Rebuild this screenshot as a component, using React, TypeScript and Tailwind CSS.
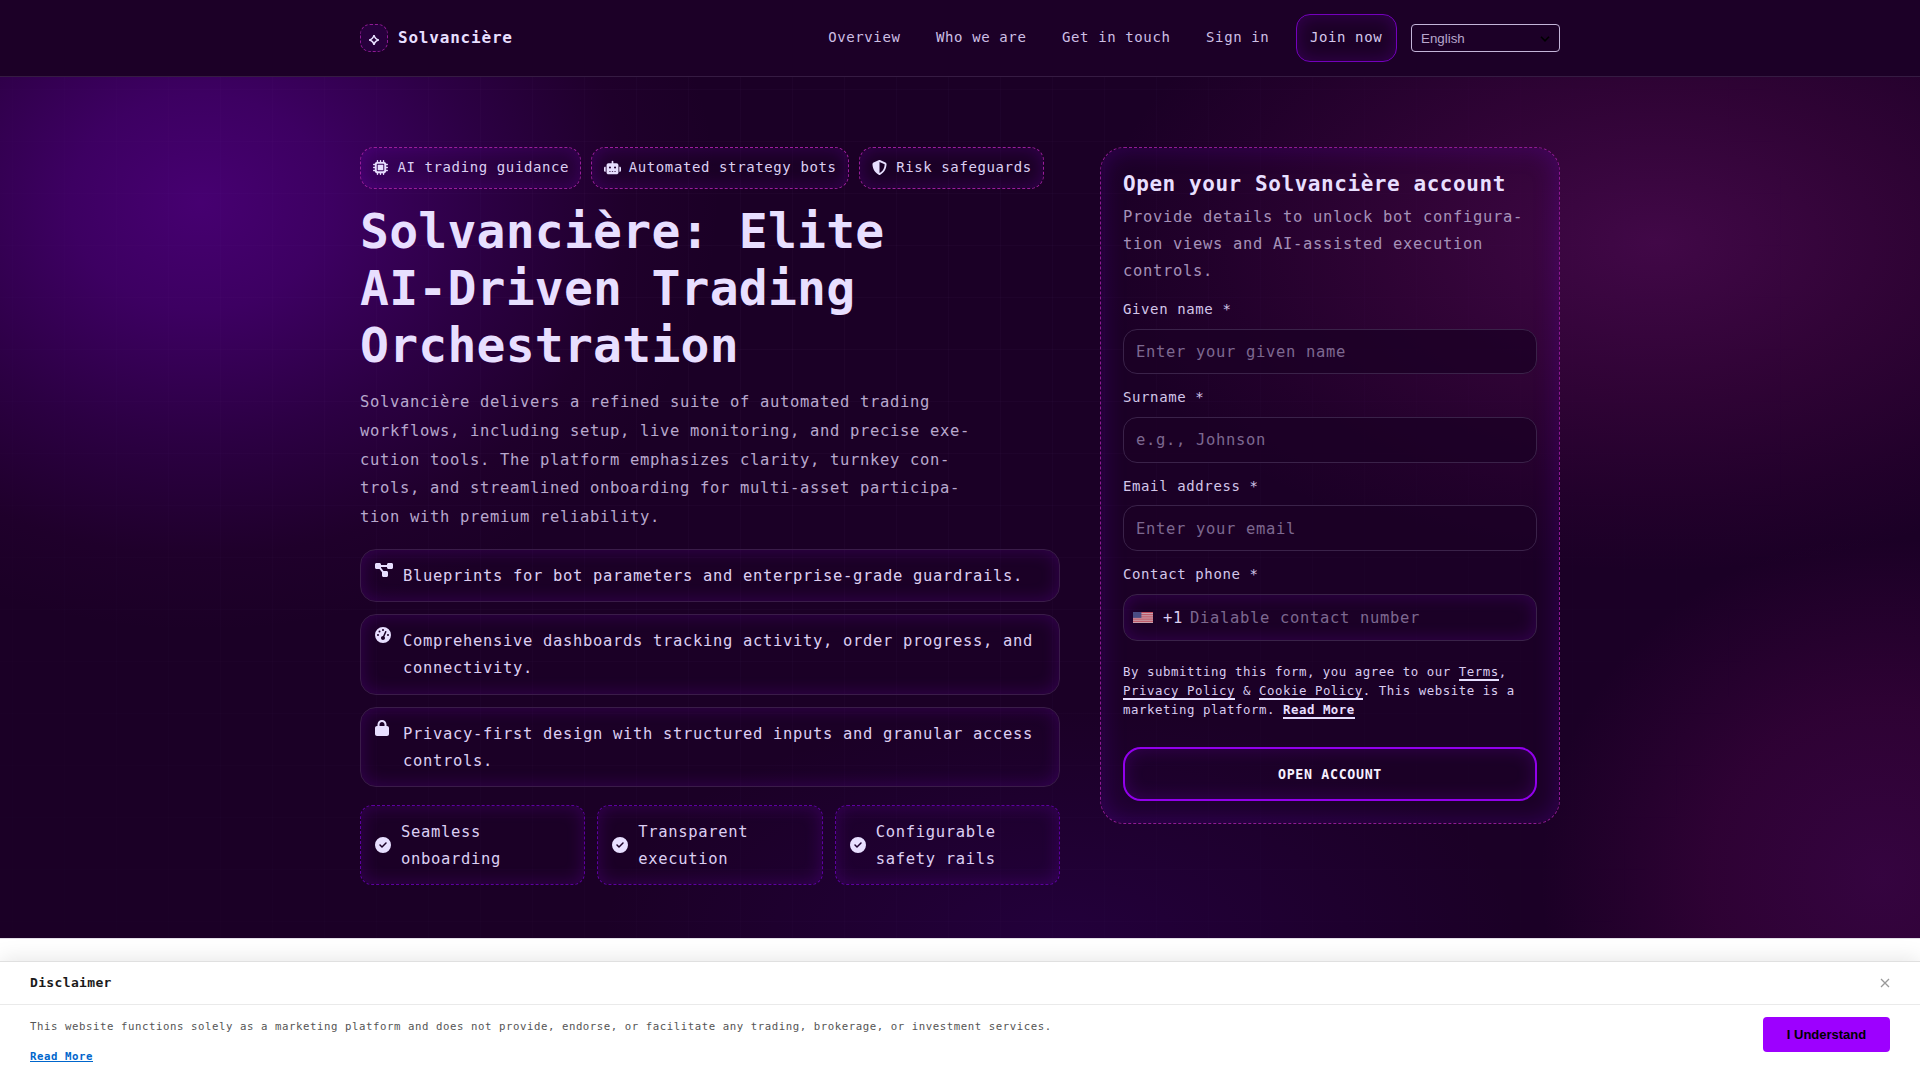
import type { ReactNode } from 'react';
import {
  FaMicrochip,
  FaRobot,
  FaShieldHalved,
  FaDiagramProject,
  FaGaugeHigh,
  FaLock,
  FaCircleCheck
} from 'react-icons/fa6';

const NAV_LINKS = ['Overview', 'Who we are', 'Get in touch', 'Sign in'];

const CHIPS = [
  { icon: <FaMicrochip className="size-[15px]" />, label: 'AI trading guidance' },
  { icon: <FaRobot className="h-[15px] w-[18px]" />, label: 'Automated strategy bots' },
  { icon: <FaShieldHalved className="size-[15px]" />, label: 'Risk safeguards' }
];

const FEATURES = [
  { icon: <FaDiagramProject className="h-4 w-[18px]" />, text: 'Blueprints for bot parameters and enterprise-grade guardrails.' },
  { icon: <FaGaugeHigh className="size-4" />, text: 'Comprehensive dashboards tracking activity, order progress, and connectivity.' },
  { icon: <FaLock className="h-4 w-[14px]" />, text: 'Privacy-first design with structured inputs and granular access controls.' }
];

const BENEFITS = [
  ['Seamless', 'onboarding'],
  ['Transparent', 'execution'],
  ['Configurable', 'safety rails']
];

const FIELDS = [
  { label: 'Given name *', placeholder: 'Enter your given name' },
  { label: 'Surname *', placeholder: 'e.g., Johnson' },
  { label: 'Email address *', placeholder: 'Enter your email' }
];

const HEADING = "font-['DejaVu_Sans_Mono',monospace] font-bold";
const SMALL = 'text-[14px] tracking-[0.61px]';
const GLOW = 'shadow-[inset_0_0_18px_rgba(157,0,255,0.2)]';

function Header() {
  return (
    <header className="h-[77px] border-b border-[#351b42] bg-[#1c0027]">
      <div className="mx-auto flex h-full w-[1200px] items-center justify-between">
        <div className="flex items-center gap-[10px]">
          <span className="flex size-7 items-center justify-center rounded-[10px] border border-dashed border-[#8f1a94] bg-[#27003c]">
            <svg viewBox="0 0 12 12" className="mt-[3px] mr-px size-3" fill="none" stroke="#e8dfff" strokeWidth="1.5">
              <path d="M6 1.2 Q6.8 5.2 10.8 6 Q6.8 6.8 6 10.8 Q5.2 6.8 1.2 6 Q5.2 5.2 6 1.2Z" />
            </svg>
          </span>
          <span className={`${HEADING} text-[16px] leading-6 tracking-[0.8px]`}>Solvancière</span>
        </div>
        <nav className="flex items-center gap-[14.4px]">
          {NAV_LINKS.map((link) => (
            <a key={link} className={`px-[10.6px] pb-[2px] text-[#cdbfe4] ${SMALL}`}>{link}</a>
          ))}
          <a className={`ml-[1.2px] flex h-12 items-center rounded-[14px] border border-[#7400bd] px-[13.4px] pb-[2px] text-[#d5c8ec] ${SMALL} ${GLOW}`}>
            Join now
          </a>
          <div className="flex h-7 w-[149px] items-center justify-between rounded-[4px] border border-[#c3b4d8] pt-px pr-[9px] pl-[9px] font-['Liberation_Sans',Arial,sans-serif] text-[13.33px] tracking-normal text-[#b7a7cc]">
            <span>English</span>
            <svg viewBox="0 0 10 6" className="h-[6px] w-[10px]" fill="none" stroke="#000" strokeWidth="1.6">
              <path d="M1 0.8 5 4.8 9 0.8" />
            </svg>
          </div>
        </nav>
      </div>
    </header>
  );
}

function Intro() {
  return (
    <div className="w-[700px]">
      <div className="flex gap-[10px]">
        {CHIPS.map((chip) => (
          <div key={chip.label} className={`flex h-[42px] items-center gap-[7.2px] rounded-[14px] border border-dashed border-[#9a1d9c] px-[11.2px] ${SMALL} ${GLOW}`}>
            <span className="flex w-[18px] justify-center pr-px pb-px">{chip.icon}</span>
            <span className="pb-[2px] whitespace-nowrap text-[#dccff3]">{chip.label}</span>
          </div>
        ))}
      </div>

      <h1 className={`${HEADING} mt-[14px] text-[48px] leading-[57.2px] tracking-[0.24px]`}>
        Solvancière: Elite
        <br />
        AI-Driven Trading
        <br />
        Orchestration
      </h1>

      <p className="mt-[13.4px] leading-[28.8px] text-[#b8a8cd]">
        Solvancière delivers a refined suite of automated trading
        <br />
        workflows, including setup, live monitoring, and precise exe-
        <br />
        cution tools. The platform emphasizes clarity, turnkey con-
        <br />
        trols, and streamlined onboarding for multi-asset participa-
        <br />
        tion with premium reliability.
      </p>

      <ul className="mt-[16.6px] flex flex-col gap-3">
        {FEATURES.map((feature) => (
          <li key={feature.text} className={`flex rounded-[16px] border border-[#3a1c49] px-[14px] pt-[13px] pb-[11.2px] ${GLOW}`}>
            <span className="-mt-px w-[28px] shrink-0">{feature.icon}</span>
            <span className="leading-[27.2px] text-[#dccff3]">{feature.text}</span>
          </li>
        ))}
      </ul>

      <div className="mt-[17.5px] grid grid-cols-3 gap-3">
        {BENEFITS.map(([first, second]) => (
          <div key={first} className={`flex h-[80.4px] items-center gap-[10px] rounded-[12px] border border-dashed border-[#5d00a0] px-[14px] ${GLOW}`}>
            <FaCircleCheck className="size-4" />
            <span className="pt-[2px] leading-[27.2px] text-[#dccff3]">
              {first}
              <br />
              {second}
            </span>
          </div>
        ))}
      </div>
    </div>
  );
}

function UsFlag() {
  return (
    <svg viewBox="0 0 20 12" className="h-[11px] w-5 opacity-80" preserveAspectRatio="none">
      <rect width="20" height="12" fill="#f6dfe4" />
      {[0, 2, 4, 6, 8, 10].map((y) => (
        <rect key={y} y={y} width="20" height="1.1" fill="#e8606a" />
      ))}
      <rect width="8.4" height="6.4" fill="#56609a" />
    </svg>
  );
}

function TermsLink({ children }: { children: ReactNode }) {
  return <a className="border-b-2 border-[#e8dfff]">{children}</a>;
}

function SignupCard() {
  return (
    <form className="flex h-[677px] w-[460px] flex-col rounded-[24px] border border-dashed border-[#8f1a94] px-[22px] pt-[22px] shadow-[inset_0_0_26px_rgba(130,0,255,0.22)]">
      <h2 className={`${HEADING} text-[21px] leading-[28px] tracking-[0.56px] whitespace-nowrap`}>
        Open your Solvancière account
      </h2>
      <p className="mt-[6px] leading-[27.2px] text-[#a491b8]">
        Provide details to unlock bot configura-
        <br />
        tion views and AI-assisted execution
        <br />
        controls.
      </p>

      <div className="mt-[11.4px] flex flex-col gap-[11.2px]">
        {FIELDS.map((field) => (
          <label key={field.label} className="flex flex-col gap-[7.2px]">
            <span className={`leading-[24.4px] text-[#d3c6e9] ${SMALL}`}>{field.label}</span>
            <span className="flex h-[45.6px] items-center rounded-[14px] border border-[#3a2249] bg-[#1b0026]/80 px-3 pt-[2px] text-[#7d6890]">
              {field.placeholder}
            </span>
          </label>
        ))}
        <label className="flex flex-col gap-[7.2px]">
          <span className={`leading-[24.4px] text-[#d3c6e9] ${SMALL}`}>Contact phone *</span>
          <span className={`flex h-[47.6px] items-center rounded-[14px] border border-[#3a2249] px-[9px] ${GLOW}`}>
            <UsFlag />
            <span className="ml-[10px] pt-[2px] text-[#dccff3]">+1</span>
            <span className="ml-[7px] pt-[2px] text-[#7d6890]">Dialable contact number</span>
          </span>
        </label>
      </div>

      <p className="mt-[20.6px] text-[12.4px] leading-[19px] tracking-[0.535px] text-[#d9ccf0]">
        By submitting this form, you agree to our <TermsLink>Terms</TermsLink>,
        <br />
        <TermsLink>Privacy Policy</TermsLink> &amp; <TermsLink>Cookie Policy</TermsLink>. This website is a
        <br />
        marketing platform. <TermsLink><b className="text-[#e8dfff]">Read More</b></TermsLink>
      </p>

      <button type="button" className={`${HEADING} mt-[28px] h-[54px] rounded-[18px] border-2 border-[#9200ec] pt-[2px] text-[13.33px] tracking-[0.64px] text-[#f6f0ff] ${GLOW}`}>
        OPEN ACCOUNT
      </button>
    </form>
  );
}

function DisclaimerBar() {
  return (
    <aside className="h-[119px] border-t border-[#e0e0e0] bg-white shadow-[0_-2px_20px_rgba(0,0,0,0.1)]">
      <div className="flex h-[43px] items-center justify-between border-b border-[#eaeaea] px-[30px]">
        <span className={`${HEADING} text-[13px] tracking-[0.35px] text-[#1a1a1a]`}>Disclaimer</span>
        <svg viewBox="0 0 10 10" className="size-[10px]" stroke="#999" strokeWidth="1.3">
          <path d="M1 1 9 9M9 1 1 9" />
        </svg>
      </div>
      <div className="flex items-start justify-between px-[30px] pt-3">
        <div className="pt-px text-[10.7px] tracking-[0.564px]">
          <p className="leading-[18px] text-[#555]">
            This website functions solely as a marketing platform and does not provide, endorse, or facilitate any trading, brokerage, or investment services.
          </p>
          <a className="mt-[12px] block leading-[18px] font-bold text-[#0066cc] underline">Read More</a>
        </div>
        <button type="button" className="h-[35px] w-[127px] rounded-[4px] bg-[#9d00ff] font-['Liberation_Sans',Arial,sans-serif] text-[13px] font-bold tracking-normal text-black">
          I Understand
        </button>
      </div>
    </aside>
  );
}

export default function App() {
  return (
    <div className="flex h-[1080px] w-[1920px] flex-col overflow-hidden bg-white font-['DejaVu_Sans_Mono',monospace] text-[15.5px] tracking-[0.67px] text-[#e8dfff]">
      <Header />
      <section className="relative h-[861px] shrink-0 bg-[#1b0026] bg-[radial-gradient(520px_430px_at_200px_125px,rgba(135,0,225,0.4),rgba(130,0,220,0.33)_25%,rgba(120,0,200,0.18)_55%,rgba(110,0,140,0.05)_82%,transparent),radial-gradient(560px_330px_at_1656px_165px,rgba(150,25,145,0.31),rgba(150,20,130,0.17)_45%,rgba(140,10,120,0.06)_80%,transparent),radial-gradient(340px_340px_at_1880px_800px,rgba(130,15,140,0.25),rgba(140,10,120,0.17)_50%,transparent),radial-gradient(460px_230px_at_1060px_861px,rgba(80,0,180,0.15),transparent)]">
        <div className="absolute inset-0 bg-[linear-gradient(to_right,rgba(200,150,255,0.03)_1px,transparent_1px),linear-gradient(to_bottom,rgba(200,150,255,0.03)_1px,transparent_1px)] mask-[radial-gradient(1100px_1100px_at_760px_260px,#000,transparent)] bg-[length:52px_52px] bg-[position:12px_12px]" />
        <div className="relative mx-auto flex w-[1200px] items-start justify-between pt-[70px]">
          <Intro />
          <SignupCard />
        </div>
      </section>
      <div className="h-[23px] shrink-0 border-t border-[#e3dfe8] bg-white" />
      <DisclaimerBar />
    </div>
  );
}
